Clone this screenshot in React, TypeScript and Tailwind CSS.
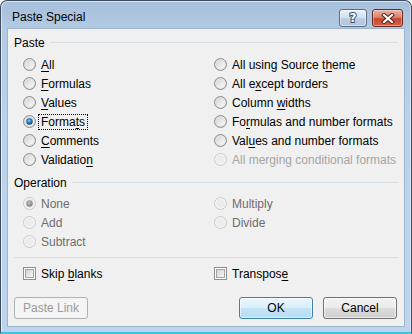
import React from "react";

const FONT = "font-['Liberation_Sans',Arial,sans-serif]";

function Mn({ children }: { children: React.ReactNode }) {
  return <span className="underline underline-offset-[2px] decoration-[1px]">{children}</span>;
}

function Radio({ checked = false, disabled = false }: { checked?: boolean; disabled?: boolean }) {
  return (
    <svg width="13" height="13" viewBox="0 0 13 13" className="shrink-0">
      <circle cx="6.5" cy="6.5" r="6" fill={disabled ? "#f4f4f4" : "url(#rbOuter)"} stroke={disabled ? "#c9c9c9" : "#8c8e90"} />
      <circle cx="6.5" cy="6.5" r="4.4" fill={disabled ? "#ececec" : "url(#rbInner)"} />
      {checked && <circle cx="6.5" cy="6.5" r="3.2" fill={disabled ? "url(#rbDotGray)" : "url(#rbDot)"} />}
    </svg>
  );
}

function Check() {
  return (
    <div className="w-[13px] h-[13px] shrink-0 border border-[#8e8f8f] bg-white p-[1px]">
      <div className="w-full h-full border border-[#a4a4a4] bg-linear-to-br from-[#d3d3d3] to-[#f6f6f6]" />
    </div>
  );
}

type Opt = { label: React.ReactNode; checked?: boolean; disabled?: boolean; faint?: boolean; focus?: boolean };

function RadioRow({ o }: { o: Opt }) {
  const color = o.faint ? "text-[#a5a5a5]" : o.disabled ? "text-[#6d6d6d]" : "text-black";
  return (
    <div className="h-[19px] flex items-center">
      <Radio checked={o.checked} disabled={o.disabled} />
      <span className={`ml-[3px] px-[2px] leading-[14px] whitespace-nowrap ${color} ${o.focus ? "outline outline-1 outline-dotted outline-black" : ""}`}>
        {o.label}
      </span>
    </div>
  );
}

function GroupHeader({ title }: { title: string }) {
  return (
    <div className="h-[16px] flex items-center gap-[5px] px-[6px]">
      <span className="leading-[16px]">{title}</span>
      <div className="flex-1 h-px bg-[#d5dfe5] mt-[-1px]" />
    </div>
  );
}

function Btn({ children, kind }: { children: React.ReactNode; kind: "disabled" | "default" | "normal" }) {
  const cls =
    kind === "disabled"
      ? "border-[#adb2b5] bg-[#f4f4f4] text-[#9b9b9b]"
      : kind === "default"
      ? "border-[#3c7fb1] bg-[linear-gradient(to_bottom,#ebf6fd_0%,#dbeefb_50%,#c4e4f7_51%,#b6dcf4_100%)] text-black shadow-[inset_0_0_0_1px_rgba(255,255,255,0.55)]"
      : "border-[#707070] bg-[linear-gradient(to_bottom,#f2f2f2_0%,#ebebeb_50%,#dddddd_51%,#cfcfcf_100%)] text-black shadow-[inset_0_0_0_1px_rgba(255,255,255,0.6)]";
  return (
    <div className={`h-[22px] w-[74px] rounded-[3px] border flex items-center justify-center ${cls}`}>{children}</div>
  );
}

export default function App() {
  const left: Opt[] = [
    { label: <><Mn>A</Mn>ll</> },
    { label: <><Mn>F</Mn>ormulas</> },
    { label: <><Mn>V</Mn>alues</> },
    { label: <>Forma<Mn>t</Mn>s</>, checked: true, focus: true },
    { label: <><Mn>C</Mn>omments</> },
    { label: <>Validatio<Mn>n</Mn></> },
  ];
  const right: Opt[] = [
    { label: <>All using Source t<Mn>h</Mn>eme</> },
    { label: <>All e<Mn>x</Mn>cept borders</> },
    { label: <>Column <Mn>w</Mn>idths</> },
    { label: <>Fo<Mn>r</Mn>mulas and number formats</> },
    { label: <>Val<Mn>u</Mn>es and number formats</> },
    { label: "All merging conditional formats", disabled: true, faint: true },
  ];
  const pasteOpts: Opt[] = [];
  left.forEach((l, i) => pasteOpts.push(l, right[i]));

  return (
    <div className={`w-[412px] h-[334px] ${FONT} text-[12px] text-black`}>
      <svg width="0" height="0" className="absolute">
        <defs>
          <radialGradient id="rbOuter" cx="50%" cy="50%" r="50%">
            <stop offset="0%" stopColor="#f2f2f2" />
            <stop offset="100%" stopColor="#dcdcdc" />
          </radialGradient>
          <linearGradient id="rbInner" x1="0" y1="0" x2="1" y2="1">
            <stop offset="0%" stopColor="#d4d5d6" />
            <stop offset="100%" stopColor="#fafafa" />
          </linearGradient>
          <radialGradient id="rbDot" cx="45%" cy="40%" r="60%">
            <stop offset="0%" stopColor="#8ed0f8" />
            <stop offset="45%" stopColor="#2d86c8" />
            <stop offset="100%" stopColor="#0c3c6a" />
          </radialGradient>
          <radialGradient id="rbDotGray" cx="45%" cy="40%" r="60%">
            <stop offset="0%" stopColor="#c4c4c4" />
            <stop offset="100%" stopColor="#7a7a7a" />
          </radialGradient>
        </defs>
      </svg>

      <div className="w-[412px] h-[334px] rounded-t-[7px] border-x border-t border-[#3e4d5e] border-b-2 border-b-[#40c3dc] bg-[linear-gradient(to_bottom,#a6bfdb_0px,#b3cae3_28px,#bbd2eb_120px,#bcd4ee_100%)] shadow-[inset_1px_1px_0_rgba(255,255,255,0.55),inset_-1px_0_0_rgba(255,255,255,0.4)] flex flex-col px-[6px] pb-[5px]">
        {/* title bar */}
        <div className="h-[27px] flex items-start shrink-0">
          <span className="mt-[9px] ml-[5px] text-[12px] leading-[15px] text-black">Paste Special</span>
          <div className="ml-auto mt-[8px] mr-[2px] flex gap-[5px]">
            <div className="w-[28px] h-[18px] rounded-[3px] border border-[#5a6d85] bg-[linear-gradient(to_bottom,#e9f0f8_0%,#d3e0ee_50%,#bccee2_51%,#b0c5de_100%)] shadow-[inset_0_0_0_1px_rgba(255,255,255,0.5)] flex items-center justify-center">
              <span className="font-['DejaVu_Sans',sans-serif] font-bold text-[12px] leading-none text-white [paint-order:stroke_fill] [-webkit-text-stroke:2px_#3e4f66]">?</span>
            </div>
            <div className="w-[31px] h-[18px] rounded-[3px] border border-[#6e2a20] bg-[linear-gradient(to_bottom,#ecb2a4_0%,#dc826d_45%,#c9452f_55%,#d4664a_100%)] shadow-[inset_0_0_0_1px_rgba(255,255,255,0.35)] flex items-center justify-center">
              <svg width="14" height="11" viewBox="0 0 14 11">
                <path d="M3 2 L11 9 M11 2 L3 9" stroke="#47201a" strokeWidth="4" strokeLinecap="square" />
                <path d="M3 2 L11 9 M11 2 L3 9" stroke="#ffffff" strokeWidth="2.2" strokeLinecap="square" />
              </svg>
            </div>
          </div>
        </div>

        {/* client */}
        <div className="flex-1 border border-[#9fb3ca] bg-[#f0f0f0] flex flex-col">
          <div className="mt-[6px]">
            <GroupHeader title="Paste" />
          </div>
          <div className="mt-[4px] grid grid-cols-[191px_1fr] pl-[15px]">
            {pasteOpts.map((o, i) => (
              <RadioRow key={i} o={o} />
            ))}
          </div>

          <div className="mt-[6px]">
            <GroupHeader title="Operation" />
          </div>
          <div className="mt-[3px] grid grid-cols-[191px_1fr] pl-[15px]">
            <RadioRow o={{ label: "None", checked: true, disabled: true }} />
            <RadioRow o={{ label: "Multiply", disabled: true }} />
            <RadioRow o={{ label: "Add", disabled: true }} />
            <RadioRow o={{ label: "Divide", disabled: true }} />
            <RadioRow o={{ label: "Subtract", disabled: true }} />
          </div>

          <div className="mt-[6px] mx-[6px] h-px bg-[#d5dfe5]" />

          <div className="mt-[6px] grid grid-cols-[191px_1fr] pl-[15px]">
            <div className="h-[19px] flex items-center gap-[5px]">
              <Check />
              <span>Skip <Mn>b</Mn>lanks</span>
            </div>
            <div className="h-[19px] flex items-center gap-[5px]">
              <Check />
              <span>Transpos<Mn>e</Mn></span>
            </div>
          </div>

          <div className="mt-[14px] flex px-[6px]">
            <Btn kind="disabled">Paste Link</Btn>
            <div className="ml-auto flex gap-[10px] mr-[1px]">
              <Btn kind="default">OK</Btn>
              <Btn kind="normal">Cancel</Btn>
            </div>
          </div>
        </div>
      </div>
    </div>
  );
}
